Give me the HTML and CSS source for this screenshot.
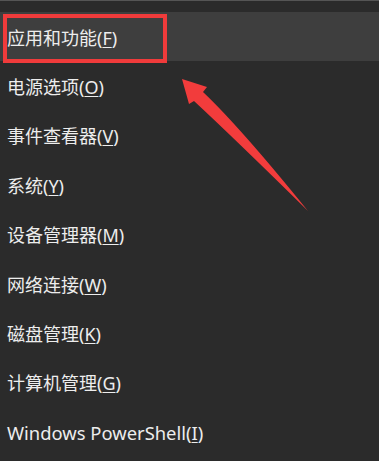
FILE: index.html
```html
<!DOCTYPE html>
<html lang="zh-CN">
<head>
<meta charset="utf-8">
<link rel="stylesheet" href="styles.css">
</head>
<body>
<div class="menu">
  <div class="item active">
    <span class="label">应用和功能(<u>F</u>)</span>
    <span class="mark"></span>
  </div>
  <div class="item"><span class="label">电源选项(<u>O</u>)</span></div>
  <div class="item"><span class="label">事件查看器(<u>V</u>)</span></div>
  <div class="item"><span class="label">系统(<u>Y</u>)</span></div>
  <div class="item"><span class="label">设备管理器(<u>M</u>)</span></div>
  <div class="item"><span class="label">网络连接(<u>W</u>)</span></div>
  <div class="item"><span class="label">磁盘管理(<u>K</u>)</span></div>
  <div class="item"><span class="label">计算机管理(<u>G</u>)</span></div>
  <div class="item"><span class="label latin">Windows PowerShell(<u>I</u>)</span></div>
</div>
<svg class="arrow" width="379" height="461" viewBox="0 0 379 461">
  <path d="M182,79 L207,87 L203,92 Q240,127 308,211 Q236,140 194,101 L189,104 Z" fill="#f23c3c"/>
</svg>
</body>
</html>
```
FILE: styles.css
```css
html, body {
  margin: 0;
  padding: 0;
}
body {
  width: 379px;
  height: 461px;
  overflow: hidden;
  background: #2b2b2b;
  position: relative;
  font-family: "Noto Sans", "Noto Sans CJK SC", sans-serif;
  color: #ededed;
}
.menu {
  border-top: 1px solid #555555;
  padding-top: 11px;
  display: flex;
  flex-direction: column;
}
.item {
  position: relative;
  height: 49.4px;
  display: flex;
  align-items: center;
  padding-left: 7px;
  font-size: 18px;
  line-height: 1;
}
.item.active {
  background: #3e3e3e;
}
.label {
  position: relative;
  top: 1px;
}
.label.latin {
  font-size: 18.4px;
}
.label u {
  text-decoration-thickness: 1px;
  text-underline-offset: 2px;
}
.mark {
  position: absolute;
  left: 3px;
  top: 2px;
  width: 164px;
  height: 49px;
  box-sizing: border-box;
  border: 4px solid #f03b3b;
}
.arrow {
  position: absolute;
  left: 0;
  top: 0;
}
```
